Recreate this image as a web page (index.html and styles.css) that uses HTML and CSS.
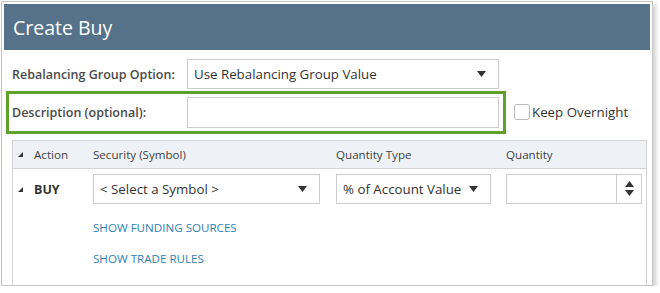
FILE: index.html
```html
<!DOCTYPE html>
<html>
<head>
    <title>Create Buy</title>
    <link rel="stylesheet" href="styles.css">
</head>
<body>
    <div class="dialog">
        <div class="dialog-header">Create Buy</div>
        <div class="form-row">
            <label class="field-label">Rebalancing Group Option:</label>
            <div class="select select-wide">
                <span>Use Rebalancing Group Value</span>
                <svg class="caret" width="9" height="6" viewBox="0 0 9 6"><polygon points="0,0 9,0 4.5,6" fill="#333"/></svg>
            </div>
        </div>
        <div class="form-row">
            <div class="highlight">
                <label class="field-label">Description (optional):</label>
                <div class="text-input"></div>
            </div>
            <label class="check">
                <span class="checkbox"></span>
                Keep Overnight
            </label>
        </div>
        <div class="grid">
            <div class="grid-head">
                <div class="col-action">
                    <svg class="tri" width="5" height="5" viewBox="0 0 5 5"><polygon points="5,0 5,5 0,5" fill="#333"/></svg>
                    Action
                </div>
                <div class="col-security">Security (Symbol)</div>
                <div class="col-type">Quantity Type</div>
                <div class="col-qty">Quantity</div>
            </div>
            <div class="grid-row">
                <div class="col-action action-buy">
                    <svg class="tri" width="5" height="5" viewBox="0 0 5 5"><polygon points="5,0 5,5 0,5" fill="#333"/></svg>
                    BUY
                </div>
                <div class="col-security">
                    <div class="select">
                        <span>&lt; Select a Symbol &gt;</span>
                        <svg class="caret" width="9" height="6" viewBox="0 0 9 6"><polygon points="0,0 9,0 4.5,6" fill="#333"/></svg>
                    </div>
                    <a class="link">SHOW FUNDING SOURCES</a>
                    <a class="link">SHOW TRADE RULES</a>
                </div>
                <div class="col-type">
                    <div class="select select-type">
                        <span>% of Account Value</span>
                        <svg class="caret" width="9" height="6" viewBox="0 0 9 6"><polygon points="0,0 9,0 4.5,6" fill="#333"/></svg>
                    </div>
                </div>
                <div class="col-qty">
                    <div class="spinner">
                        <div class="spinner-input"></div>
                        <div class="spinner-btn">
                            <svg width="9" height="16" viewBox="0 0 9 16"><polygon points="4.5,0 9,6 0,6" fill="#333"/><polygon points="0,9 9,9 4.5,15" fill="#333"/></svg>
                        </div>
                    </div>
                </div>
            </div>
        </div>
    </div>
</body>
</html>
```

FILE: styles.css
```css
body {
    margin: 0;
    background: #ffffff;
    font-family: 'Open Sans', sans-serif;
    color: #444444;
}

.dialog {
    margin: 1px 0 0 1px;
    width: 646px;
    height: 279px;
    padding: 2px;
    border: 1px solid #c6c6c6;
    box-shadow: 3px 3px 4px rgba(0, 0, 0, 0.18);
    background: #ffffff;
    overflow: hidden;
}

.dialog-header {
    height: 46px;
    background-color: #56728a;
    color: #ffffff;
    font-size: 19.5px;
    line-height: 47px;
    padding-left: 9px;
}

.form-row {
    display: flex;
    align-items: center;
    margin-top: 9px;
    padding-left: 8px;
}

.form-row + .form-row {
    margin-top: 2px;
    padding-left: 2px;
}

.field-label {
    width: 175px;
    font-size: 12.5px;
    font-weight: 600;
    color: #4a4a4a;
}

.select {
    box-sizing: border-box;
    height: 30px;
    border: 1px solid #cccccc;
    display: flex;
    align-items: center;
    justify-content: space-between;
    padding: 0 12px 0 6px;
    font-size: 13.3px;
    color: #333333;
    white-space: nowrap;
}

.select-wide {
    width: 312px;
}

.highlight {
    display: flex;
    align-items: center;
    box-sizing: border-box;
    width: 500px;
    height: 43px;
    border: 3px solid #5ea229;
    padding-left: 3px;
}

.text-input {
    box-sizing: border-box;
    width: 312px;
    height: 31px;
    border: 1px solid #cccccc;
}

.check {
    display: flex;
    align-items: center;
    margin-left: 8px;
    margin-bottom: 2px;
    font-size: 13.3px;
    color: #333333;
}

.checkbox {
    box-sizing: border-box;
    width: 16px;
    height: 16px;
    border: 1px solid #bbbbbb;
    border-radius: 3px;
    margin-right: 2px;
}

.grid {
    margin: 6px 0 0 8px;
    width: 633px;
    height: 200px;
    border: 1px solid #d4d4d4;
    border-bottom: none;
}

.grid-head {
    display: flex;
    height: 27px;
    align-items: center;
    background: #eef2f6;
    border-bottom: 1px solid #d4d4d4;
    font-size: 11.6px;
    color: #3f3f3f;
}

.col-action {
    width: 80px;
    padding-left: 5px;
    box-sizing: border-box;
    display: flex;
    align-items: center;
}

.tri {
    margin-right: 11px;
}

.col-security {
    width: 243px;
}

.col-type {
    width: 170px;
}

.col-qty {
    width: 136px;
}

.grid-row {
    display: flex;
    padding-top: 5px;
}

.grid-row .col-security .select {
    width: 227px;
}

.action-buy {
    height: 30px;
    font-weight: 700;
    font-size: 12.5px;
    color: #333333;
}

.select-type {
    width: 155px;
    padding-right: 12px;
}

.link {
    display: block;
    font-size: 11.6px;
    color: #2f7fb5;
    margin-top: 17px;
    line-height: 14px;
}

.spinner {
    display: flex;
    box-sizing: border-box;
    width: 136px;
    height: 30px;
    border: 1px solid #cccccc;
}

.spinner-input {
    flex: 1;
    border-right: 1px solid #cccccc;
}

.spinner-btn {
    width: 24px;
    display: flex;
    align-items: center;
    justify-content: center;
}
```
